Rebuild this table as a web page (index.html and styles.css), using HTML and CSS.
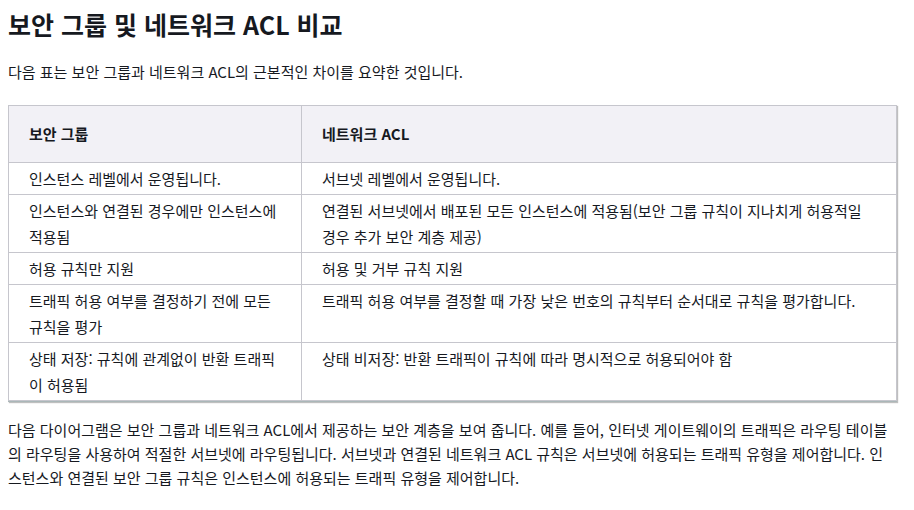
FILE: index.html
```html
<!DOCTYPE html>
<html lang="ko">
<head>
<meta charset="utf-8">
<link rel="stylesheet" href="styles.css">
</head>
<body>
<main class="page">
  <h1 class="title">보안 그룹 및 네트워크 ACL 비교</h1>
  <p class="intro">다음 표는 보안 그룹과 네트워크 ACL의 근본적인 차이를 요약한 것입니다.</p>
  <div class="table-wrap">
    <table class="cmp">
      <thead>
        <tr><th class="c1">보안 그룹</th><th>네트워크 ACL</th></tr>
      </thead>
      <tbody>
        <tr><td>인스턴스 레벨에서 운영됩니다.</td><td>서브넷 레벨에서 운영됩니다.</td></tr>
        <tr><td>인스턴스와 연결된 경우에만 인스턴스에 적용됨</td><td>연결된 서브넷에서 배포된 모든 인스턴스에 적용됨(보안 그룹 규칙이 지나치게 허용적일 경우 추가 보안 계층 제공)</td></tr>
        <tr><td>허용 규칙만 지원</td><td>허용 및 거부 규칙 지원</td></tr>
        <tr><td>트래픽 허용 여부를 결정하기 전에 모든 규칙을 평가</td><td>트래픽 허용 여부를 결정할 때 가장 낮은 번호의 규칙부터 순서대로 규칙을 평가합니다.</td></tr>
        <tr><td>상태 저장: 규칙에 관계없이 반환 트래픽이 허용됨</td><td>상태 비저장: 반환 트래픽이 규칙에 따라 명시적으로 허용되어야 함</td></tr>
      </tbody>
    </table>
  </div>
  <p class="body-text">다음 다이어그램은 보안 그룹과 네트워크 ACL에서 제공하는 보안 계층을 보여 줍니다. 예를 들어, 인터넷 게이트웨이의 트래픽은 라우팅 테이블의 라우팅을 사용하여 적절한 서브넷에 라우팅됩니다. 서브넷과 연결된 네트워크 ACL 규칙은 서브넷에 허용되는 트래픽 유형을 제어합니다. 인스턴스와 연결된 보안 그룹 규칙은 인스턴스에 허용되는 트래픽 유형을 제어합니다.</p>
</main>
</body>
</html>
```
FILE: styles.css
```css
html, body {
  margin: 0;
  padding: 0;
  background: #ffffff;
}
body {
  font-family: "Noto Sans CJK KR", "Noto Sans", sans-serif;
  color: #16191f;
}
.page {
  width: 890px;
  padding: 0 8px;
}
.title {
  margin: 0;
  padding-top: 8px;
  font-size: 25px;
  line-height: 32px;
  font-weight: 700;
}
.intro {
  margin: 20px 0 0 0;
  font-size: 15px;
  line-height: 24px;
}
.table-wrap {
  margin-top: 21px;
  box-shadow: 1px 1px 1px rgba(0, 0, 0, 0.25);
  border-bottom: 1px solid #aab7b8;
  width: 889px;
}
.cmp {
  width: 100%;
  border-collapse: collapse;
  font-size: 15px;
  line-height: 26px;
}
.cmp th, .cmp td {
  border: 1px solid #c6c6cd;
  text-align: left;
  vertical-align: top;
  padding: 3px 20px 2px 20px;
}
.cmp th {
  background: #f2f1f6;
  font-weight: 700;
  padding-top: 15px;
  padding-bottom: 15px;
}
.cmp .c1 {
  width: 252px;
}
.body-text {
  width: 887px;
  margin: 16px 0 0 0;
  font-size: 15px;
  line-height: 24px;
}
```
